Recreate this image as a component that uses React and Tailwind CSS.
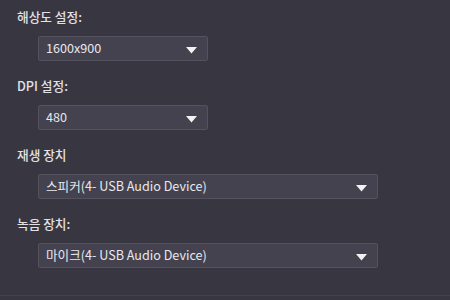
import React from "react";

const font = { fontFamily: '"Noto Sans CJK KR", "Noto Sans", sans-serif' };

function Arrow() {
  return (
    <svg width="11" height="7" viewBox="0 0 11 7" className="mt-[3px]">
      <path d="M0 0 L11 0 L5.5 6.5 Z" fill="#f2f2f2" />
    </svg>
  );
}

function Field({ label, value, wide }) {
  return (
    <div className="flex flex-col">
      <div className="h-[20px] leading-[20px] text-[12.7px] font-medium text-[#e2e2e6]">{label}</div>
      <div
        className={`ml-[21px] mt-[9px] h-[25px] flex items-center justify-between pl-[7px] pr-[10px] rounded-[2px] border border-[#54525f] bg-[#44424f] ${
          wide ? "w-[340px]" : "w-[170px]"
        }`}
      >
        <span className="text-[12.6px] text-[#e8e8ec] leading-none">{value}</span>
        <Arrow />
      </div>
    </div>
  );
}

export default function App() {
  return (
    <div className="w-[450px] h-[300px] bg-[#383641] flex flex-col overflow-hidden" style={font}>
      <div className="flex flex-col gap-[15px] pl-[17px] pt-[7px]">
        <Field label="해상도 설정:" value="1600x900" />
        <Field label="DPI 설정:" value="480" />
        <Field label="재생 장치" value="스피커(4- USB Audio Device)" wide />
        <Field label="녹음 장치:" value="마이크(4- USB Audio Device)" wide />
      </div>
      <div className="flex-1" />
      <div className="h-[5px] border-t border-[#43414c]" />
    </div>
  );
}
